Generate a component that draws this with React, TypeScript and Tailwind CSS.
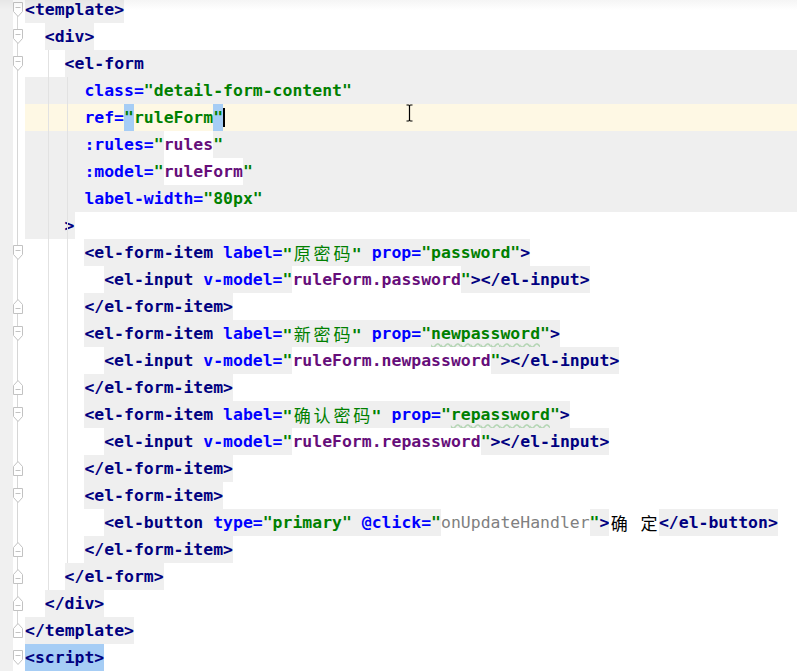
import React from "react";

type Kind = "tag" | "attr" | "str" | "expr" | "fn" | "plain";
type Seg = { t: string; k: Kind; bg?: "g" | "w" | "b"; wavy?: boolean };
type Line = {
  indent: 0 | 2 | 4 | 6 | 8;
  segs: Seg[];
  fill?: "full" | "from" | "cursor";
  indentGray?: boolean;
  fold?: "open" | "close";
  caret?: boolean;
};

const kindCls: Record<Kind, string> = {
  tag: "text-[#000080] font-bold",
  attr: "text-[#0000ff] font-bold",
  str: "text-[#008000] font-bold",
  expr: "text-[#660e7a] font-bold",
  fn: "text-[#808080]",
  plain: "text-black",
};

const bgCls = { g: "bg-[#efefef]", w: "bg-white", b: "bg-[#a6cdf5]" };

const indentW = {
  0: "w-0",
  2: "w-[19.8px]",
  4: "w-[39.6px]",
  6: "w-[59.4px]",
  8: "w-[79.2px]",
};

// form item with label + prop
const item = (label: string, prop: string, wavy: boolean): Seg[] => [
  { t: "<el-form-item", k: "tag", bg: "g" },
  { t: " ", k: "plain", bg: "g" },
  { t: "label=", k: "attr", bg: "g" },
  { t: `"${label}"`, k: "str", bg: "g" },
  { t: " ", k: "plain", bg: "g" },
  { t: "prop=", k: "attr", bg: "g" },
  { t: '"', k: "str", bg: "g" },
  { t: prop, k: "str", bg: "g", wavy },
  { t: '"', k: "str", bg: "g" },
  { t: ">", k: "tag", bg: "g" },
];

const input = (model: string): Seg[] => [
  { t: "<el-input", k: "tag", bg: "g" },
  { t: " ", k: "plain", bg: "g" },
  { t: "v-model=", k: "attr", bg: "g" },
  { t: '"', k: "str", bg: "g" },
  { t: model, k: "expr", bg: "w" },
  { t: '"', k: "str", bg: "g" },
  { t: "></el-input>", k: "tag", bg: "g" },
];

const closeItem: Seg[] = [{ t: "</el-form-item>", k: "tag", bg: "g" }];

const lines: Line[] = [
  { indent: 0, fold: "open", segs: [{ t: "<template>", k: "tag", bg: "g" }] },
  { indent: 2, fold: "open", segs: [{ t: "<div>", k: "tag", bg: "g" }] },
  { indent: 4, fold: "open", fill: "from", segs: [{ t: "<el-form", k: "tag" }] },
  {
    indent: 6,
    fill: "full",
    segs: [
      { t: "class=", k: "attr" },
      { t: '"detail-form-content"', k: "str" },
    ],
  },
  {
    indent: 6,
    fill: "cursor",
    caret: true,
    segs: [
      { t: "ref=", k: "attr" },
      { t: '"', k: "str", bg: "b" },
      { t: "ruleForm", k: "str" },
      { t: '"', k: "str", bg: "b" },
    ],
  },
  {
    indent: 6,
    fill: "full",
    segs: [
      { t: ":rules=", k: "attr" },
      { t: '"', k: "str" },
      { t: "rules", k: "expr", bg: "w" },
      { t: '"', k: "str" },
    ],
  },
  {
    indent: 6,
    fill: "full",
    segs: [
      { t: ":model=", k: "attr" },
      { t: '"', k: "str" },
      { t: "ruleForm", k: "expr", bg: "w" },
      { t: '"', k: "str" },
    ],
  },
  {
    indent: 6,
    fill: "full",
    segs: [
      { t: "label-width=", k: "attr" },
      { t: '"80px"', k: "str" },
    ],
  },
  { indent: 4, indentGray: true, segs: [{ t: ">", k: "tag", bg: "g" }] },
  { indent: 6, fold: "open", segs: item("原密码", "password", false) },
  { indent: 8, segs: input("ruleForm.password") },
  { indent: 6, fold: "close", segs: closeItem },
  { indent: 6, fold: "open", segs: item("新密码", "newpassword", true) },
  { indent: 8, segs: input("ruleForm.newpassword") },
  { indent: 6, fold: "close", segs: closeItem },
  { indent: 6, fold: "open", segs: item("确认密码", "repassword", true) },
  { indent: 8, segs: input("ruleForm.repassword") },
  { indent: 6, fold: "close", segs: closeItem },
  { indent: 6, fold: "open", segs: [{ t: "<el-form-item>", k: "tag", bg: "g" }] },
  {
    indent: 8,
    segs: [
      { t: "<el-button", k: "tag", bg: "g" },
      { t: " ", k: "plain", bg: "g" },
      { t: "type=", k: "attr", bg: "g" },
      { t: '"primary"', k: "str", bg: "g" },
      { t: " ", k: "plain", bg: "g" },
      { t: "@click=", k: "attr", bg: "g" },
      { t: '"', k: "str", bg: "g" },
      { t: "onUpdateHandler", k: "fn", bg: "w" },
      { t: '"', k: "str", bg: "g" },
      { t: ">", k: "tag", bg: "g" },
      { t: "确 定", k: "plain", bg: "w" },
      { t: "</el-button>", k: "tag", bg: "g" },
    ],
  },
  { indent: 6, fold: "close", segs: closeItem },
  { indent: 4, fold: "close", segs: [{ t: "</el-form>", k: "tag", bg: "g" }] },
  { indent: 2, fold: "close", segs: [{ t: "</div>", k: "tag", bg: "g" }] },
  { indent: 0, fold: "close", segs: [{ t: "</template>", k: "tag", bg: "g" }] },
  { indent: 0, fold: "open", segs: [{ t: "<script>", k: "tag", bg: "b" }] },
];

function Text({ t }: { t: string }) {
  return (
    <>
      {Array.from(t).map((ch, i) =>
        /[\u4e00-\u9fff]/.test(ch) ? (
          <span
            key={i}
            className="inline-block w-[19.8px] text-center font-['Noto_Sans_CJK_SC',sans-serif] font-normal text-[17px]"
          >
            {ch}
          </span>
        ) : (
          <React.Fragment key={i}>{ch}</React.Fragment>
        )
      )}
    </>
  );
}

function FoldMarker({ type }: { type: "open" | "close" }) {
  return (
    <svg width="10" height="15" viewBox="0 0 10 15" className="relative">
      {type === "open" ? (
        <>
          <path d="M0.5 0.5H9.5V9.5L5 14.5L0.5 9.5Z" fill="#fff" stroke="#c2c2c2" />
          <path d="M2.5 5.5H7.5" stroke="#c2c2c2" />
        </>
      ) : (
        <>
          <path d="M5 0.5L9.5 5.5V14.5H0.5V5.5Z" fill="#fff" stroke="#c2c2c2" />
          <path d="M2.5 9.5H7.5" stroke="#c2c2c2" />
        </>
      )}
    </svg>
  );
}

export default function App() {
  const gray = "bg-[#efefef]";
  return (
    <div className="relative w-[797px] h-[672px] overflow-hidden bg-white font-['DejaVu_Sans_Mono',monospace] text-[16.45px]">
      <div className="flex flex-col -mt-[4.5px]">
        {lines.map((line, n) => (
          <div key={n} className="flex h-[27px] shrink-0">
            {/* gutter */}
            <div className="flex shrink-0 w-[25px] h-full">
              <div className="w-[13px] h-full bg-[#f0f0f0]" />
              <div className="relative w-[10px] h-full flex items-center">
                {n < 24 && (
                  <div
                    className={`absolute left-[4px] w-px bg-[#d6d6d6] ${
                      n === 0 ? "top-1/2 bottom-0" : n === 23 ? "top-0 bottom-1/2" : "inset-y-0"
                    }`}
                  />
                )}
                {line.fold && <FoldMarker type={line.fold} />}
              </div>
              <div className="w-[2px]" />
            </div>
            {/* code */}
            <div
              className={`flex flex-1 h-full ${
                line.fill === "full" ? gray : line.fill === "cursor" ? "bg-[#fef8e4]" : ""
              }`}
            >
              <div className={`${indentW[line.indent]} shrink-0 ${line.indentGray ? gray : ""}`} />
              <div className={`flex ${line.fill === "from" ? "flex-1 " + gray : ""}`}>
                {line.segs.map((s, i) => (
                  <span
                    key={i}
                    className={`whitespace-pre leading-[27px] ${kindCls[s.k]} ${s.bg ? bgCls[s.bg] : ""}`}
                  >
                    {s.wavy ? (
                      <span className="underline decoration-wavy decoration-[#b5d6b5] underline-offset-[4px]">
                        <Text t={s.t} />
                      </span>
                    ) : (
                      <Text t={s.t} />
                    )}
                  </span>
                ))}
                {line.caret && <span className="self-center w-[2px] h-[19px] bg-black" />}
              </div>
            </div>
          </div>
        ))}
      </div>

      {/* indent guides */}
      <div className="absolute left-[48px] top-[49.5px] h-[540px] w-px bg-[#e2e2e2]" />
      <div className="absolute left-[67px] top-[76.5px] h-[486px] w-px bg-[#e2e2e2]" />

      {/* top shadow */}
      <div className="absolute inset-x-0 top-0 h-[10px] bg-gradient-to-b from-black/[0.04] to-transparent" />

      {/* mouse I-beam */}
      <svg
        className="absolute left-[405px] top-[104px]"
        width="9"
        height="18"
        viewBox="0 0 9 18"
        fill="none"
        stroke="#000"
        strokeWidth="1.2"
      >
        <path d="M1.5 1H3.5Q4.5 1 4.5 2.5V15.5Q4.5 17 3.5 17H1.5" />
        <path d="M7.5 1H5.5Q4.5 1 4.5 2.5M4.5 15.5Q4.5 17 5.5 17H7.5" />
      </svg>
    </div>
  );
}
